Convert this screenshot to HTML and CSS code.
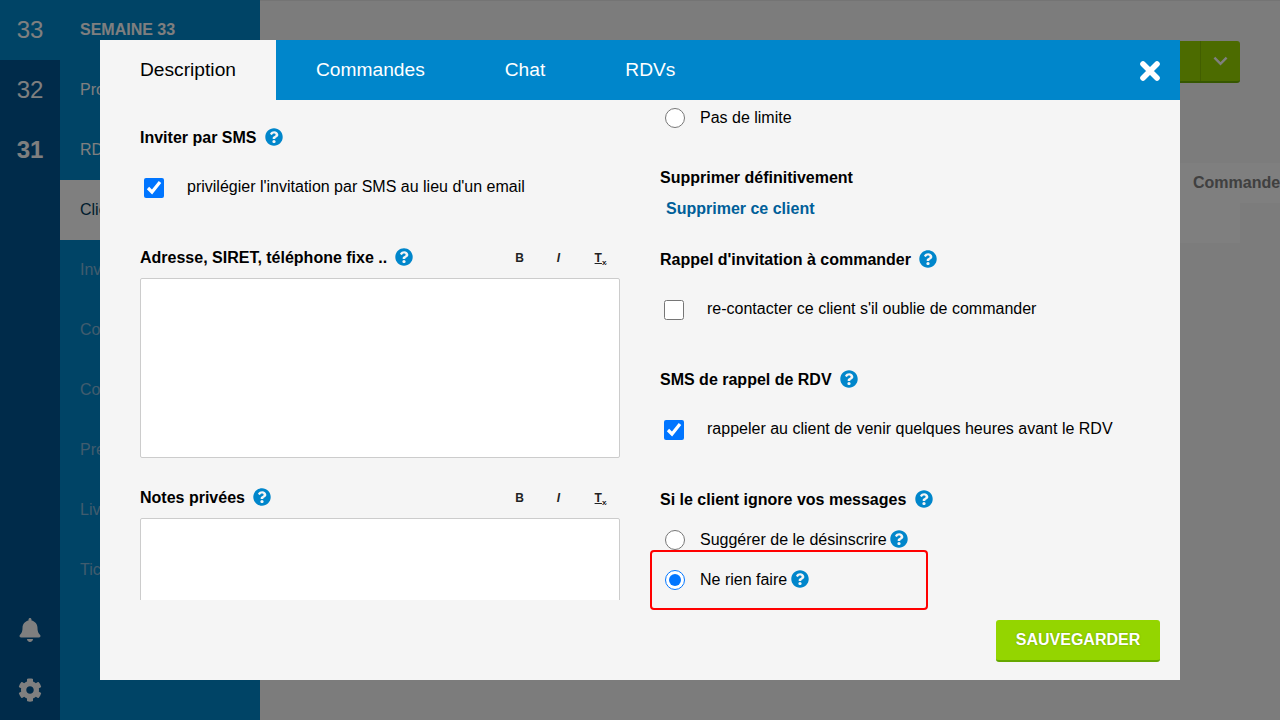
FILE: index.html
```html
<!DOCTYPE html>
<html lang="fr">
<head>
<meta charset="utf-8">
<title>Client</title>
<link rel="stylesheet" href="styles.css">
</head>
<body>
<svg class="defs" width="0" height="0" aria-hidden="true">
  <symbol id="q" viewBox="0 0 512 512"><path fill="currentColor" d="M504 256c0 136.997-111.043 248-248 248S8 392.997 8 256C8 119.083 119.043 8 256 8s248 111.083 248 248zM262.655 90c-54.497 0-89.255 22.957-116.549 63.758-3.536 5.286-2.353 12.415 2.715 16.258l34.699 26.31c5.205 3.947 12.621 3.008 16.665-2.122 17.864-22.658 30.113-35.797 57.303-35.797 20.429 0 45.698 13.148 45.698 32.958 0 14.976-12.363 22.667-32.534 33.976C247.128 238.528 216 254.941 216 296v4c0 6.627 5.373 12 12 12h56c6.627 0 12-5.373 12-12v-1.333c0-28.462 83.186-29.647 83.186-106.667 0-58.002-60.165-102-116.531-102zM256 338c-25.365 0-46 20.635-46 46 0 25.364 20.635 46 46 46s46-20.636 46-46c0-25.365-20.635-46-46-46z"/></symbol>
</svg>

<aside class="rail">
  <div class="week current">33</div>
  <div class="week">32</div>
  <div class="week strong">31</div>
  <div class="rail-icons">
    <svg class="rail-icon" viewBox="0 0 448 512"><path fill="currentColor" d="M224 512c35.32 0 63.97-28.65 63.97-64H160.03c0 35.35 28.65 64 63.97 64zm215.39-149.71c-19.32-20.76-55.47-51.99-55.47-154.29 0-77.7-54.48-139.9-127.94-155.16V32c0-17.67-14.32-32-31.98-32s-31.98 14.33-31.98 32v20.84C118.56 68.1 64.08 130.3 64.08 208c0 102.3-36.15 133.53-55.47 154.29-6 6.45-8.66 14.16-8.61 21.71.11 16.4 12.98 32 32.1 32h383.8c19.12 0 32-15.6 32.1-32 .05-7.55-2.61-15.27-8.61-21.71z"/></svg>
    <svg class="rail-icon" viewBox="0 0 512 512"><path fill="currentColor" d="M487.4 315.7l-42.6-24.6c4.3-23.2 4.3-47 0-70.2l42.6-24.6c4.9-2.8 7.1-8.6 5.5-14-11.1-35.6-30-67.8-54.7-94.6-3.8-4.1-10-5.1-14.8-2.3L380.8 110c-17.9-15.4-38.5-27.3-60.8-35.1V25.8c0-5.6-3.9-10.5-9.4-11.7-36.7-8.2-74.3-7.8-109.2 0-5.5 1.2-9.4 6.1-9.4 11.7V75c-22.2 7.9-42.8 19.8-60.8 35.1L88.7 85.5c-4.9-2.8-11-1.9-14.8 2.3-24.7 26.7-43.6 58.9-54.7 94.6-1.7 5.4.6 11.2 5.5 14L67.3 221c-4.3 23.2-4.3 47 0 70.2l-42.6 24.6c-4.9 2.8-7.1 8.6-5.5 14 11.1 35.6 30 67.8 54.7 94.6 3.8 4.1 10 5.1 14.8 2.3l42.6-24.6c17.9 15.4 38.5 27.3 60.8 35.1v49.2c0 5.6 3.9 10.5 9.4 11.7 36.7 8.2 74.3 7.8 109.2 0 5.5-1.2 9.4-6.1 9.4-11.7v-49.2c22.2-7.9 42.8-19.8 60.8-35.1l42.6 24.6c4.9 2.8 11 1.9 14.8-2.3 24.7-26.7 43.6-58.9 54.7-94.6 1.5-5.5-.7-11.3-5.6-14.1zM256 336c-44.1 0-80-35.9-80-80s35.9-80 80-80 80 35.9 80 80-35.9 80-80 80z"/></svg>
  </div>
</aside>

<nav class="nav">
  <div class="nav-title">SEMAINE 33</div>
  <div class="nav-item">Produits</div>
  <div class="nav-item">RDVs</div>
  <div class="nav-item active">Clients</div>
  <div class="nav-item dim">Invitations</div>
  <div class="nav-item dim">Commandes</div>
  <div class="nav-item dim">Coupons</div>
  <div class="nav-item dim">Présentation</div>
  <div class="nav-item dim">Livraisons</div>
  <div class="nav-item dim">Tickets</div>
</nav>

<main class="main">
  <div class="actions">
    <div class="split-button">
      <span class="split-label"></span>
      <span class="split-toggle">
        <svg class="chevron" viewBox="0 0 16 10"><path d="M1.5 1.5 8 8l6.5-6.5" fill="none" stroke="currentColor" stroke-width="2.6"/></svg>
      </span>
    </div>
  </div>
  <div class="table-head"><span class="table-col">Commande</span></div>
  <div class="table-row"></div>
</main>

<div class="overlay"></div>

<section class="modal">
  <header class="tabs">
    <div class="tab selected">Description</div>
    <div class="tab">Commandes</div>
    <div class="tab">Chat</div>
    <div class="tab">RDVs</div>
    <svg class="close" viewBox="0 0 22 22"><path d="M4 4 18 18M18 4 4 18" fill="none" stroke="currentColor" stroke-width="5.6" stroke-linecap="round"/></svg>
  </header>

  <div class="content">
    <div class="col col-left">
      <div class="head head-first">Inviter par SMS <svg class="help head-help"><use href="#q"/></svg></div>
      <label class="check-row gap-31"><input class="box" type="checkbox" checked><span class="check-label">privilégier l'invitation par SMS au lieu d'un email</span></label>

      <div class="head head-49 head-bar">
        <span class="head-text">Adresse, SIRET, téléphone fixe .. <svg class="help head-help nudge-left"><use href="#q"/></svg></span>
        <span class="tools"><b class="tool">B</b><i class="tool">I</i><span class="tool clear">T<sub class="clear-x">x</sub></span></span>
      </div>
      <div class="editor"></div>

      <div class="head head-29 head-bar">
        <span class="head-text">Notes privées <svg class="help head-help"><use href="#q"/></svg></span>
        <span class="tools"><b class="tool">B</b><i class="tool">I</i><span class="tool clear">T<sub class="clear-x">x</sub></span></span>
      </div>
      <div class="editor"></div>
    </div>

    <div class="col col-right">
      <label class="radio-row"><input class="round" type="radio" name="limit"><span>Pas de limite</span></label>

      <div class="head head-39">Supprimer définitivement</div>
      <a class="link">Supprimer ce client</a>

      <div class="head head-31">Rappel d'invitation à commander <svg class="help head-help"><use href="#q"/></svg></div>
      <label class="check-row gap-31"><input class="box" type="checkbox"><span class="check-label">re-contacter ce client s'il oublie de commander</span></label>

      <div class="head head-49">SMS de rappel de RDV <svg class="help head-help"><use href="#q"/></svg></div>
      <label class="check-row gap-31"><input class="box" type="checkbox" checked><span class="check-label">rappeler au client de venir quelques heures avant le RDV</span></label>

      <div class="head head-49">Si le client ignore vos messages <svg class="help head-help"><use href="#q"/></svg></div>
      <label class="radio-row gap-21"><input class="round" type="radio" name="ignore"><span>Suggérer de le désinscrire</span><svg class="help radio-help"><use href="#q"/></svg></label>
      <label class="radio-row gap-20"><input class="round" type="radio" name="ignore" checked><span>Ne rien faire</span><svg class="help radio-help nudge-right"><use href="#q"/></svg></label>
    </div>
  </div>

  <footer class="footer"><button class="save">SAUVEGARDER</button></footer>
  <div class="highlight"></div>
</section>
</body>
</html>
```
FILE: styles.css
```css
* { box-sizing: border-box; }
html, body { height: 100%; }
body {
  margin: 0;
  display: flex;
  height: 720px;
  overflow: hidden;
  background: #f8f8f8;
  font-family: "Liberation Sans", Arial, sans-serif;
  font-size: 16px;
  color: #000;
}
.defs { position: absolute; }

.rail {
  width: 60px;
  flex: none;
  background: #005694;
  color: #fff;
  display: flex;
  flex-direction: column;
}
.week {
  height: 60px;
  line-height: 60px;
  text-align: center;
  font-size: 24px;
}
.week.current { background: #0088cc; }
.week.strong { font-weight: 700; }
.rail-icons {
  margin-top: auto;
  display: flex;
  flex-direction: column;
  align-items: center;
}
.rail-icon {
  width: 24px;
  height: 24px;
  margin-bottom: 36px;
}
.rail-icons .rail-icon:last-child { margin-bottom: 18px; }

.nav {
  width: 200px;
  flex: none;
  background: #0088cc;
  color: #fff;
}
.nav-title {
  height: 60px;
  line-height: 60px;
  padding-left: 20px;
  font-weight: 700;
}
.nav-item {
  height: 60px;
  line-height: 60px;
  padding-left: 20px;
  white-space: nowrap;
}
.nav-item.active { background: #fff; color: #003a5c; }
.nav-item.dim { color: #80b8dc; }

.main {
  flex: 1;
  min-width: 0;
  border-top: 1px solid #e8e8e8;
  overflow: hidden;
}
.actions {
  display: flex;
  justify-content: flex-end;
  padding: 40px 40px 0 0;
}
.split-button {
  display: flex;
  width: 260px;
  height: 42px;
  background: #98d600;
  border-bottom: 2px solid #6cae00;
  border-radius: 3px;
}
.split-label { flex: 1; }
.split-toggle {
  width: 40px;
  border-left: 1px solid #84bc00;
  display: flex;
  align-items: center;
  justify-content: center;
  color: #fff;
}
.chevron { width: 15px; height: 10px; }
.table-head {
  margin-top: 80px;
  height: 40px;
  line-height: 40px;
  background: #fff;
  display: flex;
  justify-content: flex-end;
}
.table-col {
  width: 87px;
  flex: none;
  font-weight: 700;
  color: #808080;
  white-space: nowrap;
}
.table-row {
  height: 40px;
  margin-right: 40px;
  background: #fff;
}

.overlay {
  position: absolute;
  inset: 0;
  background: rgba(0, 0, 0, .5);
}

.modal {
  position: absolute;
  left: 100px;
  top: 40px;
  width: 1080px;
  height: 640px;
  background: #f5f5f5;
  display: flex;
  flex-direction: column;
}
.tabs {
  height: 60px;
  flex: none;
  background: #0086cb;
  display: flex;
  align-items: stretch;
  position: relative;
}
.tab {
  padding: 0 40px;
  line-height: 60px;
  font-size: 19.2px;
  color: #fff;
}
.tab.selected { background: #f5f5f5; color: #000; }
.close {
  position: absolute;
  right: 19px;
  top: 20px;
  width: 22px;
  height: 22px;
  color: #fff;
}

.content {
  height: 500px;
  flex: none;
  overflow: hidden;
  display: flex;
  gap: 40px;
  padding: 0 40px;
}
.col { width: 480px; flex: none; }
.col-left { padding-top: 27px; }
.col-right { padding-top: 8px; }

.head {
  font-weight: 700;
  height: 20px;
  line-height: 22px;
  display: flex;
  align-items: flex-start;
  gap: 4px;
  white-space: pre;
}
.head-text { display: flex; align-items: flex-start; gap: 4px; white-space: pre; }
.head-bar { justify-content: space-between; }
.head-29 { margin-top: 29px; }
.head-31 { margin-top: 31px; }
.head-39 { margin-top: 39px; }
.head-49 { margin-top: 49px; }

.help {
  width: 18px;
  height: 18px;
  color: #0086cb;
  flex: none;
}
.head-help { margin-top: 1px; }
.nudge-left { margin-left: -1px; }
.radio-help { margin-left: 3px; margin-top: -2px; }
.nudge-right { margin-left: 4px; }

.tools { display: flex; align-items: center; width: 120px; }
.tool {
  width: 40px;
  text-align: center;
  font-size: 12px;
  font-weight: 700;
  color: #222;
}
.clear { text-decoration: underline; margin-left: 3px; }
.clear-x { font-size: 8px; line-height: 0; }

.check-row {
  display: flex;
  align-items: flex-start;
  line-height: 20px;
}
.gap-31 { margin-top: 31px; }
.box {
  width: 20px;
  height: 20px;
  margin: 0 23px 0 4px;
  flex: none;
}
.check-label { margin-top: -1px; }

.radio-row {
  display: flex;
  align-items: center;
  line-height: 20px;
}
.gap-21 { margin-top: 21px; }
.gap-20 { margin-top: 20px; }
.round {
  width: 20px;
  height: 20px;
  margin: 0 15px 0 5px;
  flex: none;
}

.link {
  display: block;
  margin-top: 11px;
  padding-left: 6px;
  height: 20px;
  line-height: 22px;
  font-weight: 700;
  color: #005f99;
}

.editor {
  margin-top: 11px;
  height: 180px;
  flex: none;
  background: #fff;
  border: 1px solid #ccc;
  border-radius: 2px;
}

.footer {
  flex: 1;
  display: flex;
  justify-content: flex-end;
  align-items: flex-start;
  padding: 20px 20px 0 0;
}
.save {
  width: 164px;
  height: 42px;
  padding: 0;
  border: 0;
  border-bottom: 2px solid #66a800;
  border-radius: 3px;
  background: #94d500;
  color: #fff;
  font-family: inherit;
  font-size: 16px;
  font-weight: 700;
  text-shadow: 0 0 2px rgba(0, 0, 0, .25);
}

.highlight {
  position: absolute;
  left: 550px;
  top: 510px;
  width: 278px;
  height: 60px;
  border: 2px solid #f00;
  border-radius: 4px;
}
```
